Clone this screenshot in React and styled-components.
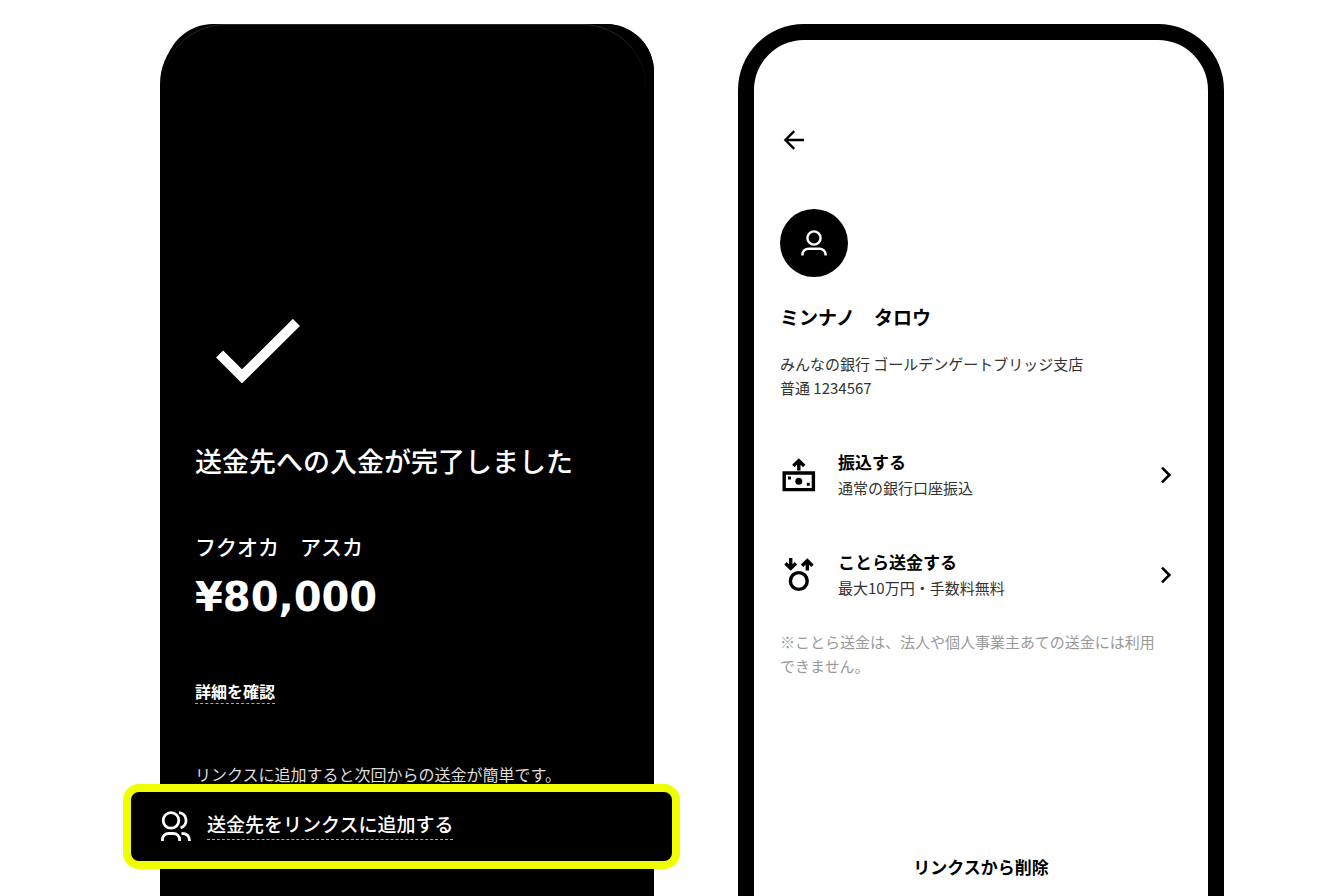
import React from "react";
import styled, { createGlobalStyle } from "styled-components";

const App = () => {
  return (
    <>
      <GlobalStyle />
      <Page>
        <DarkPhone>
          <CheckIcon viewBox="0 0 84 64" aria-hidden="true">
            <path d="M3.6 35 L26 57.4 L80.4 3.4" />
          </CheckIcon>
          <DoneTitle>送金先への入金が完了しました</DoneTitle>
          <Recipient>フクオカ　アスカ</Recipient>
          <Amount>¥80,000</Amount>
          <DetailLink href="#detail">詳細を確認</DetailLink>
          <Hint>リンクスに追加すると次回からの送金が簡単です。</Hint>
          <Highlight type="button">
            <PeopleIcon viewBox="0 0 30 30" aria-hidden="true">
              <circle cx="10" cy="9.4" r="7.8" />
              <path d="M18 1.6a7.8 7.8 0 0 1 1.6 15.2" />
              <path d="M1.4 30v-1.3a6.2 6.2 0 0 1 6.2-6.2h4.8a6.2 6.2 0 0 1 6.2 6.2V30" />
              <path d="M20.5 22.3c5 0 8 2.4 8 7.7" />
            </PeopleIcon>
            <HighlightText>送金先をリンクスに追加する</HighlightText>
          </Highlight>
        </DarkPhone>

        <LightPhone>
          <BackButton type="button" aria-label="戻る">
            <svg width="24" height="24" viewBox="0 0 24 24" aria-hidden="true">
              <path d="M22 12H3.6M12.2 3.2 3.4 12l8.8 8.8" />
            </svg>
          </BackButton>
          <Avatar>
            <svg width="28" height="28" viewBox="0 0 28 28" aria-hidden="true">
              <circle cx="14" cy="9" r="6.6" />
              <path d="M2.4 26.4v-.8a6 6 0 0 1 6-5.8h11.2a6 6 0 0 1 6 5.8v.8" />
            </svg>
          </Avatar>
          <AccountName>ミンナノ　タロウ</AccountName>
          <BankInfo>
            みんなの銀行 ゴールデンゲートブリッジ支店
            <br />
            普通 1234567
          </BankInfo>
          <MenuList>
            <li>
              <MenuButton type="button">
                <TransferIcon />
                <MenuText>
                  <MenuTitle>振込する</MenuTitle>
                  <MenuSub>通常の銀行口座振込</MenuSub>
                </MenuText>
                <Chevron />
              </MenuButton>
            </li>
            <li>
              <MenuButton type="button">
                <KotoraIcon />
                <MenuText>
                  <MenuTitle>ことら送金する</MenuTitle>
                  <MenuSub>最大10万円・手数料無料</MenuSub>
                </MenuText>
                <Chevron />
              </MenuButton>
            </li>
          </MenuList>
          <Note>
            ※ことら送金は、法人や個人事業主あての送金には利用できません。
          </Note>
          <DeleteButton type="button">リンクスから削除</DeleteButton>
        </LightPhone>
      </Page>
    </>
  );
};

const TransferIcon = () => (
  <MenuIcon viewBox="0 0 36 36" aria-hidden="true">
    <path d="M4.2 16h29.2v16.6H4.2z" strokeWidth="3.4" />
    <path d="M18.8 13.4V4M13.4 9l5.4-5.4L24.2 9" strokeWidth="3.4" />
    <circle cx="18.8" cy="24.2" r="3.5" fill="#000" stroke="none" />
    <path d="M8 19.6h3v3H8zM26.8 25.8h3v3h-3z" fill="#000" stroke="none" />
  </MenuIcon>
);

const KotoraIcon = () => (
  <MenuIcon viewBox="0 0 36 36" aria-hidden="true">
    <circle cx="18.8" cy="24" r="8.4" strokeWidth="3.4" />
    <path d="M10.7 1v9.6M5.5 6.2l5.2 5.2 5.2-5.2" strokeWidth="3.4" />
    <path d="M27.3 13.6V4M22.1 8.8l5.2-5.2 5.2 5.2" strokeWidth="3.4" />
  </MenuIcon>
);

const Chevron = () => (
  <ChevronIcon viewBox="0 0 12 18" aria-hidden="true">
    <path d="M2 1.6 9.4 9 2 16.4" />
  </ChevronIcon>
);

const GlobalStyle = createGlobalStyle`
  * {
    box-sizing: border-box;
  }
  body {
    margin: 0;
    background: #fff;
    color: #000;
    font-family: "Noto Sans CJK JP", sans-serif;
  }
  h1, h2, p, ul {
    margin: 0;
    padding: 0;
  }
  ul {
    list-style: none;
  }
  button {
    margin: 0;
    padding: 0;
    border: none;
    background: none;
    color: inherit;
    font-family: inherit;
    text-align: left;
    cursor: pointer;
  }
`;

const Page = styled.main`
  display: grid;
  grid-template-columns: 494fr 486fr;
  column-gap: 84px;
  min-height: 100vh;
  padding: 24px 120px 0 160px;
`;

const DarkPhone = styled.section`
  position: relative;
  display: flex;
  flex-direction: column;
  align-items: flex-start;
  padding: 295px 35px 27px;
  border-radius: 60px 48px 0 0;
  background: #000;
  color: #fff;

  /* frame behind the screen, set slightly to the right */
  &::before {
    content: "";
    position: absolute;
    top: 0;
    left: 5px;
    right: 0;
    height: 120px;
    border-radius: 48px 48px 0 0;
    background: #000;
  }

  /* faint rim of the screen corners */
  &::after {
    content: "";
    position: absolute;
    top: 0;
    left: 2px;
    right: 8px;
    height: 120px;
    border-top: 1px solid #2a2a2a;
    border-radius: 64px 64px 0 0;
  }
`;

const CheckIcon = styled.svg`
  width: 84px;
  height: 64px;
  margin-left: 21px;
  fill: none;
  stroke: #fff;
  stroke-width: 10;
`;

const DoneTitle = styled.h1`
  margin-top: 58px;
  font-size: 27px;
  font-weight: 500;
  line-height: 40px;
`;

const Recipient = styled.p`
  margin-top: 49px;
  font-size: 21px;
  font-weight: 500;
  line-height: 32px;
`;

const Amount = styled.p`
  margin-top: 11px;
  font-family: "DejaVu Sans", sans-serif;
  font-size: 40px;
  font-weight: 700;
  line-height: 48px;
`;

const DetailLink = styled.a`
  margin-top: 58px;
  border-bottom: 1px dashed #aaa;
  color: inherit;
  font-size: 16px;
  font-weight: 700;
  line-height: 24px;
  text-decoration: none;
`;

const Hint = styled.p`
  margin-top: 60px;
  color: #ddd;
  font-size: 16px;
  font-weight: 400;
  line-height: 20px;
`;

const Highlight = styled.button`
  display: flex;
  align-items: center;
  align-self: stretch;
  gap: 16px;
  margin: 0 -61px 0 -72px;
  border: 8px solid #f0ff00;
  border-radius: 16px;
  background: #000;

  && {
    padding: 19px 30px 20px;
  }
`;

const PeopleIcon = styled.svg`
  flex: none;
  width: 30px;
  height: 30px;
  fill: none;
  stroke: #fff;
  stroke-width: 2.8;
`;

const HighlightText = styled.span`
  padding-bottom: 3px;
  border-bottom: 1px dashed #aaa;
  font-size: 19px;
  font-weight: 500;
  line-height: 24px;
`;

const LightPhone = styled.section`
  display: flex;
  flex-direction: column;
  align-items: flex-start;
  padding: 88px 36px 17px 26px;
  border: 16px solid #000;
  border-bottom: none;
  border-radius: 66px 66px 0 0;
`;

const BackButton = styled.button`
  display: flex;
  margin-left: 2px;

  svg {
    fill: none;
    stroke: #000;
    stroke-width: 2.4;
  }
`;

const Avatar = styled.div`
  display: flex;
  align-items: center;
  justify-content: center;
  width: 68px;
  height: 68px;
  margin-top: 57px;
  border-radius: 50%;
  background: #000;

  svg {
    fill: none;
    stroke: #fff;
    stroke-width: 2.4;
  }
`;

const AccountName = styled.h2`
  margin-top: 26px;
  font-size: 19px;
  font-weight: 700;
  line-height: 28px;
`;

const BankInfo = styled.p`
  margin-top: 21px;
  color: #333;
  font-size: 15px;
  line-height: 24px;
`;

const MenuList = styled.ul`
  display: flex;
  flex-direction: column;
  align-self: stretch;
  gap: 48px;
  margin-top: 49px;
`;

const MenuButton = styled.button`
  display: flex;
  align-items: center;
  width: 100%;
`;

const MenuIcon = styled.svg`
  flex: none;
  width: 36px;
  height: 36px;
  fill: none;
  stroke: #000;
`;

const MenuText = styled.span`
  display: flex;
  flex: 1;
  flex-direction: column;
  margin-left: 22px;
  line-height: 26px;
`;

const MenuTitle = styled.span`
  font-size: 17px;
  font-weight: 700;
`;

const MenuSub = styled.span`
  color: #333;
  font-size: 15px;
`;

const ChevronIcon = styled.svg`
  flex: none;
  width: 12px;
  height: 18px;
  fill: none;
  stroke: #000;
  stroke-width: 2.6;
`;

const Note = styled.p`
  margin-top: 29px;
  padding-right: 8px;
  color: #999;
  font-size: 15px;
  line-height: 24px;
`;

const DeleteButton = styled.button`
  align-self: center;
  font-size: 17px;
  font-weight: 700;
  line-height: 24px;

  && {
    margin: auto 0 0 10px;
  }
`;

export default App;
